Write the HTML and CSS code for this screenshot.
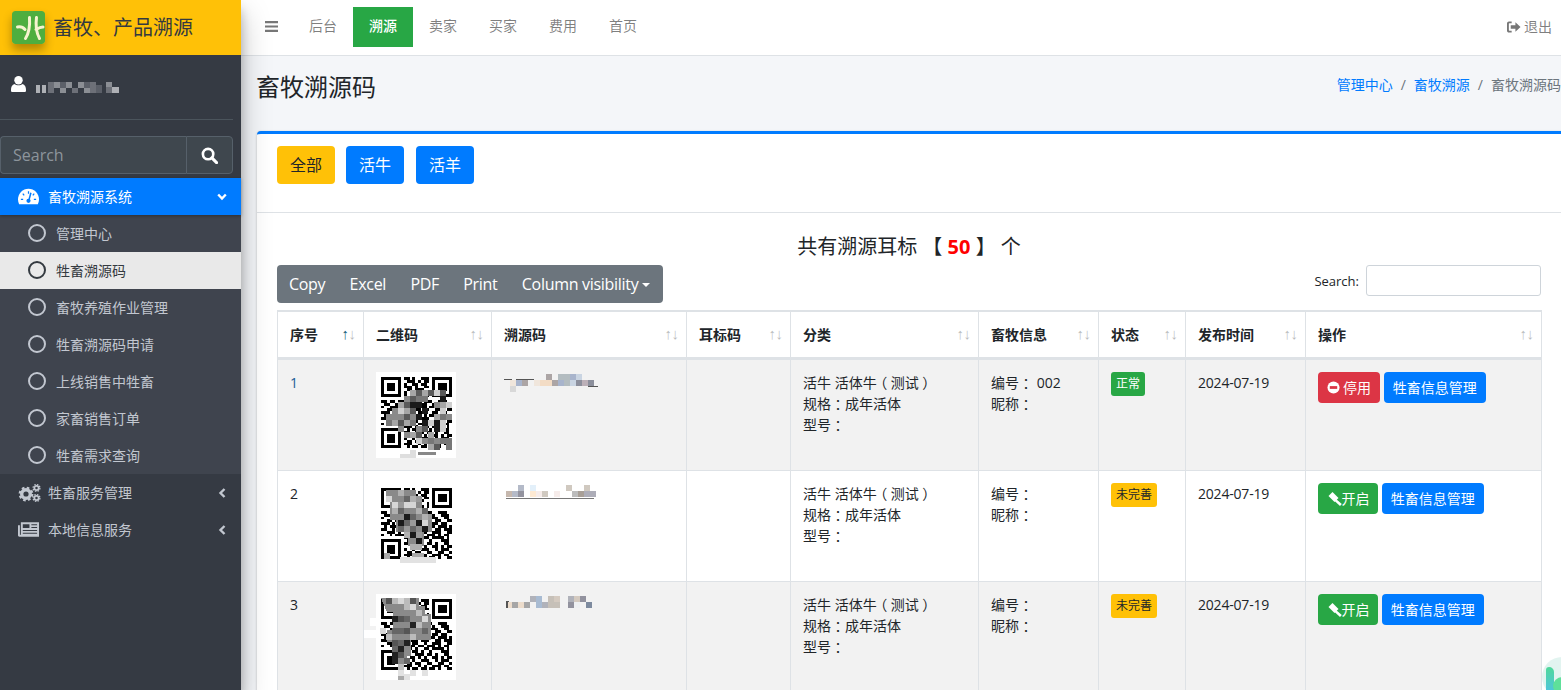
FILE: index.html
```html
<!DOCTYPE html>
<html lang="zh">
<head>
<meta charset="utf-8">
<title>畜牧溯源码</title>
<link rel="stylesheet" href="styles.css">
</head>
<body>
<svg class="defs" width="0" height="0">
  <defs>
    <g id="finder">
      <path d="M0 0h7v7h-7zM1 1v5h5v-5z" fill-rule="evenodd"/>
      <path d="M2 2h3v3h-3z"/>
    </g>
    <g id="qr">
      <g fill="#000" transform="translate(5 5) scale(2.85)" shape-rendering="crispEdges">
        <use href="#finder"/>
        <use href="#finder" x="18"/>
        <use href="#finder" y="18"/>
        <path fill="none" stroke="#000" d="M8 .5h2M11 .5h1M14 .5h3M9 1.5h3M13 1.5h1M15 1.5h2M8 2.5h1M11 2.5h2M14 2.5h2M8 3.5h3M12 3.5h1M15 3.5h2M9 4.5h2M12 4.5h3M8 5.5h1M10 5.5h1M13 5.5h1M16 5.5h1M8 6.5h1M10 6.5h1M12 6.5h1M14 6.5h1M16 6.5h1M9 7.5h3M14 7.5h2M0 8.5h2M3 8.5h2M6 8.5h3M11 8.5h2M15 8.5h3M20 8.5h3M1 9.5h2M5 9.5h2M9 9.5h2M13 9.5h3M18 9.5h1M21 9.5h3M0 10.5h1M3 10.5h3M7 10.5h2M11 10.5h1M14 10.5h2M17 10.5h3M22 10.5h2M2 11.5h2M5 11.5h1M8 11.5h3M12 11.5h2M16 11.5h1M19 11.5h2M23 11.5h2M0 12.5h3M4 12.5h1M6 12.5h3M10 12.5h1M13 12.5h3M18 12.5h2M21 12.5h2M1 13.5h1M3 13.5h3M7 13.5h1M9 13.5h2M12 13.5h1M15 13.5h1M17 13.5h2M20 13.5h3M24 13.5h1M0 14.5h2M4 14.5h1M6 14.5h2M10 14.5h3M14 14.5h3M19 14.5h2M22 14.5h3M2 15.5h3M6 15.5h1M8 15.5h1M11 15.5h2M15 15.5h1M18 15.5h3M23 15.5h2M0 16.5h1M3 16.5h1M5 16.5h3M9 16.5h3M13 16.5h2M16 16.5h3M20 16.5h1M22 16.5h2M8 17.5h3M12 17.5h1M15 17.5h2M18 17.5h4M23 17.5h1M9 18.5h1M11 18.5h2M14 18.5h1M17 18.5h1M21 18.5h3M8 19.5h2M12 19.5h3M16 19.5h2M19 19.5h1M22 19.5h2M10 20.5h2M13 20.5h1M15 20.5h1M18 20.5h2M21 20.5h1M23 20.5h2M8 21.5h1M11 21.5h1M14 21.5h3M19 21.5h1M21 21.5h3M9 22.5h2M12 22.5h2M16 22.5h2M20 22.5h2M24 22.5h1M8 23.5h3M13 23.5h1M15 23.5h1M18 23.5h3M22 23.5h2M9 24.5h1M11 24.5h2M14 24.5h2M17 24.5h2M20 24.5h1M23 24.5h2"/>
      </g>
    </g>
  </defs>
</svg>

<aside class="sidebar">
  <div class="brand">
    <svg class="brand-logo" viewBox="0 0 33 33" width="33" height="33">
      <rect width="33" height="33" rx="3" fill="#4fae3f"/>
      <path d="M17.500 6.500C18 14 17 22 13.500 27.500M5.500 16c3-.6 5.500.2 7.500 2.500M24.500 6.500C23.500 14 24 21 27.500 27.500M24 18.500c2.500-1.500 5-2.500 7-2.500" fill="none" stroke="#f7f3cf" stroke-width="3" stroke-linecap="round"/>
    </svg>
    <span class="brand-text">畜牧、产品溯源</span>
  </div>
  <div class="user-panel">
    <svg class="user-icon" viewBox="0 0 16 18" width="15" height="18"><circle cx="8" cy="5" r="4.500" fill="#fff"/><path d="M1 17.500c-1 0-1-1-1-2 0-3 1-5.500 3.500-6.500 2.500 1.800 6.500 1.800 9 0 2.500 1 3.500 3.500 3.500 6.500 0 1 0 2-1 2z" fill="#fff"/></svg>
    <svg class="user-blur" viewBox="0 0 84 14" width="84" height="14" shape-rendering="crispEdges">
      <path fill="#aeb0b5" d="M0 4h4v8h-4zM6 4h4v8h-4zM76 6h7v6h-7z"/>
      <path fill="#8b8e94" d="M18 1h6v6h-6zM30 1h6v6h-6zM42 1h6v6h-6zM24 7h6v5h-6zM48 7h6v5h-6zM70 1h6v5h-6z"/>
      <path fill="#6d7078" d="M12 1h6v11h-6zM36 7h6v5h-6zM54 1h6v11h-6zM70 6h6v6h-6z"/>
      <path fill="#5b5f68" d="M24 1h6v6h-6zM48 1h6v6h-6zM60 4h6v8h-6z"/>
    </svg>
  </div>
  <div class="side-search">
    <input class="side-input" type="text" placeholder="Search">
    <button class="side-btn" type="button" aria-label="Search">
      <svg viewBox="0 0 18 18" width="17" height="17"><circle cx="7.500" cy="7.500" r="5.500" fill="none" stroke="#fff" stroke-width="2.800"/><path d="M11.500 11.500l5 5" stroke="#fff" stroke-width="3.200" stroke-linecap="round"/></svg>
    </button>
  </div>
  <ul class="menu">
    <li class="menu-item menu-open">
      <svg class="menu-icon" viewBox="0 0 22 17" width="21" height="17"><path d="M11 .5C5 .5 0 5.500 0 11.500c0 1.800.4 3.400 1.200 5h19.600c.8-1.600 1.200-3.200 1.200-5C22 5.500 17 .5 11 .5z" fill="#fff"/><path d="M11 3v2.500M5 5.500l1.500 1.800M3 11.500h2.400M17 5.500l-1.500 1.800M19 11.500h-2.400" stroke="#007bff" stroke-width="1.300"/><path d="M13.500 4.500l-2 7.500" stroke="#007bff" stroke-width="1.600"/><circle cx="11" cy="13" r="2.200" fill="#007bff"/></svg>
      <span>畜牧溯源系统</span>
      <svg class="chev" viewBox="0 0 10 8" width="10" height="8"><path d="M1.200 1.500L5 5.500l3.800-4" fill="none" stroke="#fff" stroke-width="2.400"/></svg>
    </li>
    <li>
      <ul class="submenu">
        <li class="sub-item"><i class="ring"></i><span>管理中心</span></li>
        <li class="sub-item sub-active"><i class="ring"></i><span>牲畜溯源码</span></li>
        <li class="sub-item"><i class="ring"></i><span>畜牧养殖作业管理</span></li>
        <li class="sub-item"><i class="ring"></i><span>牲畜溯源码申请</span></li>
        <li class="sub-item"><i class="ring"></i><span>上线销售中牲畜</span></li>
        <li class="sub-item"><i class="ring"></i><span>家畜销售订单</span></li>
        <li class="sub-item"><i class="ring"></i><span>牲畜需求查询</span></li>
      </ul>
    </li>
    <li class="menu-item">
      <svg class="menu-icon" viewBox="0 0 23 18" width="23" height="18"><circle cx="8" cy="10" r="4.300" fill="none" stroke="#c2c7d0" stroke-width="3.400"/><circle cx="8" cy="10" r="6.300" fill="none" stroke="#c2c7d0" stroke-width="2.200" stroke-dasharray="2.600 2.350"/><circle cx="18.500" cy="4" r="2.100" fill="none" stroke="#c2c7d0" stroke-width="1.700"/><circle cx="18.500" cy="4" r="3.400" fill="none" stroke="#c2c7d0" stroke-width="1.300" stroke-dasharray="1.500 1.170"/><circle cx="18.500" cy="14" r="2.100" fill="none" stroke="#c2c7d0" stroke-width="1.700"/><circle cx="18.500" cy="14" r="3.400" fill="none" stroke="#c2c7d0" stroke-width="1.300" stroke-dasharray="1.500 1.170"/></svg>
      <span>牲畜服务管理</span>
      <svg class="chev chev-left" viewBox="0 0 8 10" width="8" height="10"><path d="M6.500 1L2.500 5l4 4" fill="none" stroke="#c2c7d0" stroke-width="2.400"/></svg>
    </li>
    <li class="menu-item">
      <svg class="menu-icon" viewBox="0 0 22 15" width="21" height="15"><path d="M3 0h19v15H1.500C.5 15 0 14.400 0 13.500V3h2v10h1zM5 2v4h7V2zm9 0v1h6V2zm0 3v1h6V5zM5 8v1h15V8zm0 3v1h15v-1z" fill="#c2c7d0" fill-rule="evenodd"/></svg>
      <span>本地信息服务</span>
      <svg class="chev chev-left" viewBox="0 0 8 10" width="8" height="10"><path d="M6.500 1L2.500 5l4 4" fill="none" stroke="#c2c7d0" stroke-width="2.400"/></svg>
    </li>
  </ul>
</aside>

<div class="main">
  <nav class="topnav">
    <a class="nav-burger" aria-label="menu">
      <svg viewBox="0 0 13 11" width="13" height="11"><path d="M0 0h13v2.200H0zM0 4.400h13v2.200H0zM0 8.800h13V11H0z" fill="#777"/></svg>
    </a>
    <a class="nav-link">后台</a>
    <a class="nav-link nav-current">溯源</a>
    <a class="nav-link">卖家</a>
    <a class="nav-link">买家</a>
    <a class="nav-link">费用</a>
    <a class="nav-link">首页</a>
    <a class="nav-exit">
      <svg viewBox="0 0 15 12" width="14" height="12"><path d="M5 0H2C1 0 0 1 0 2v8c0 1 1 2 2 2h3v-2H2.500C2.200 10 2 9.800 2 9.500v-7c0-.3.200-.5.500-.5H5z" fill="#777"/><path d="M9 1l5.500 5L9 11V8H4V4h5z" fill="#777"/></svg>
      退出
    </a>
  </nav>

  <header class="page-head">
    <h1 class="page-title">畜牧溯源码</h1>
    <div class="crumbs"><a>管理中心</a><b>/</b><a>畜牧溯源</a><b>/</b><span>畜牧溯源码</span></div>
  </header>

  <section class="card">
    <div class="card-head">
      <a class="btn btn-lg btn-amber">全部</a>
      <a class="btn btn-lg btn-blue">活牛</a>
      <a class="btn btn-lg btn-blue btn-third">活羊</a>
    </div>
    <div class="card-body">
      <h3 class="count">共有溯源耳标 【 <strong>50</strong> 】 个</h3>
      <div class="toolbar">
        <div class="export">
          <span>Copy</span><span>Excel</span><span>PDF</span><span>Print</span><span class="caret">Column visibility</span>
        </div>
        <label class="filter">Search:<input type="search" class="filter-input"></label>
      </div>
      <table class="grid">
        <colgroup>
          <col class="c1"><col class="c2"><col class="c3"><col class="c4"><col class="c5"><col class="c6"><col class="c7"><col class="c8"><col class="c9">
        </colgroup>
        <thead>
          <tr>
            <th class="sorted">序号</th><th>二维码</th><th>溯源码</th><th>耳标码</th><th>分类</th><th>畜牧信息</th><th>状态</th><th>发布时间</th><th>操作</th>
          </tr>
        </thead>
        <tbody>
          <tr class="odd">
            <td class="idx">1</td>
            <td>
              <svg class="qr" viewBox="0 0 80 86" width="80" height="86" shape-rendering="crispEdges">
                <rect width="80" height="86" fill="#fff"/>
                <use href="#qr"/>
                <path fill="#8a8a8a" d="M28 24h6v6h-6zM16 36h6v6h-6zM10 42h6v6h-6zM22 42h6v6h-6zM40 54h6v6h-6zM28 60h6v6h-6zM46 66h6v6h-6zM34 42h6v6h-6zM16 42h6v6h-6zM22 54h6v6h-6zM58 30h6v6h-6zM70 42h6v6h-6zM58 66h6v6h-6z"/>
                <path fill="#a6a6a6" d="M34 18h6v6h-6zM46 18h6v6h-6zM22 30h6v6h-6zM28 36h6v6h-6zM16 48h6v6h-6zM28 48h6v6h-6zM34 60h6v6h-6zM52 72h6v6h-6zM64 30h6v6h-6zM58 42h6v6h-6zM52 60h6v6h-6z"/>
                <path fill="#5a5a5a" d="M40 18h6v6h-6zM52 18h6v6h-6zM34 24h6v6h-6zM34 36h6v6h-6zM28 42h6v6h-6zM22 48h6v6h-6zM46 54h6v6h-6zM58 72h6v6h-6zM64 18h6v6h-6zM28 30h6v6h-6zM40 60h6v6h-6z"/>
                <path fill="#1a1a1a" d="M34 30h6v6h-6zM40 30h6v6h-6zM46 36h6v6h-6zM40 42h6v6h-6zM64 24h6v6h-6zM58 54h6v6h-6zM58 48h6v6h-6zM46 48h6v6h-6z"/>
                <path fill="#cfcfcf" d="M58 18h6v6h-6zM64 36h6v6h-6zM70 30h6v6h-6zM22 36h6v6h-6zM52 48h6v6h-6zM64 54h6v6h-6zM40 66h6v6h-6zM64 48h6v6h-6z"/>
                <path fill="#777" d="M46 24h6v6h-6zM10 48h6v6h-6zM64 66h6v6h-6zM70 72h6v6h-6zM64 42h6v6h-6zM40 24h6v6h-6zM34 48h6v6h-6zM70 66h6v6h-6zM52 66h6v6h-6z"/>
                <path fill="#dedede" d="M24 82h10v4h-10zM34 78h6v8h-6z"/>
                <path fill="#888" d="M42 80h18v3h-18z"/>
              </svg>
            </td>
            <td>
              <svg class="code" viewBox="0 0 96 22" width="96" height="22" shape-rendering="crispEdges">
                <path fill="#555" d="M0 7h8v1h-8zM12 7h18v1h-18zM84 14h10v1h-10z"/>
                <path fill="#f0e6dc" d="M6 8h6v6h-6zM30 8h6v6h-6z"/>
                <path fill="#a8b4cc" d="M12 8h6v6h-6zM54 8h6v6h-6zM66 2h6v6h-6z"/>
                <path fill="#aca5a5" d="M18 8h6v6h-6zM42 2h6v6h-6zM48 8h6v6h-6z"/>
                <path fill="#f3dcc5" d="M36 8h6v6h-6zM42 8h6v6h-6z"/>
                <path fill="#b3bcc0" d="M54 2h6v6h-6zM60 2h6v6h-6zM60 8h6v6h-6z"/>
                <path fill="#c9d4e2" d="M66 8h6v6h-6zM72 2h6v6h-6z"/>
                <path fill="#8c8f9c" d="M72 8h6v6h-6zM84 8h6v6h-6z"/>
                <path fill="#bcb0b8" d="M78 8h6v6h-6z"/>
                <path fill="#d8d8d8" d="M6 14h6v6h-6z"/>
              </svg>
            </td>
            <td></td>
            <td><div>活牛 活体牛<span class="punct">（</span>测试<span class="punct">）</span></div><div>规格<span class="punct">：</span>成年活体</div><div>型号<span class="punct">：</span></div></td>
            <td><div>编号<span class="punct">：</span> 002</div><div>昵称<span class="punct">：</span></div></td>
            <td><span class="tag tag-green">正常</span></td>
            <td class="date">2024-07-19</td>
            <td class="ops">
              <a class="btn btn-sm btn-red"><svg class="btn-icon" viewBox="0 0 14 14" width="13" height="13"><circle cx="7" cy="7" r="6.500" fill="#fff"/><path d="M3 5.500h8v3H3z" fill="#dc3545"/></svg>停用</a>
              <a class="btn btn-sm btn-blue">牲畜信息管理</a>
            </td>
          </tr>
          <tr>
            <td>2</td>
            <td>
              <svg class="qr" viewBox="0 0 80 86" width="80" height="86" shape-rendering="crispEdges">
                <use href="#qr"/>
                <path fill="#8a8a8a" d="M10 7h30v6h6v12h6v6h4v18h-8v14h-16v-14h-12v-12h-6v-24h-4v-6z"/>
                <path fill="#b0b0b0" d="M22 7h6v6h-6zM34 13h6v6h-6zM16 25h6v6h-6zM40 25h6v6h-6zM46 31h6v6h-6zM28 49h6v6h-6zM34 61h6v6h-6zM40 61h6v6h-6z"/>
                <path fill="#666" d="M28 13h6v6h-6zM22 25h6v6h-6zM34 31h6v6h-6zM28 37h6v6h-6zM22 43h6v6h-6zM34 43h6v6h-6zM46 25h6v6h-6z"/>
                <path fill="#1a1a1a" d="M28 31h6v6h-6zM40 37h6v6h-6zM46 43h6v6h-6zM34 49h6v6h-6zM40 55h6v6h-6zM22 37h6v6h-6z"/>
                <path fill="#d6d6d6" d="M16 19h6v6h-6zM28 19h6v6h-6zM34 19h6v6h-6zM10 13h6v6h-6zM46 37h6v6h-6z"/>
                <path fill="#999" d="M22 19h6v6h-6zM40 13h6v6h-6zM34 37h6v6h-6zM28 43h6v6h-6zM52 31h4v6h-4zM40 49h6v6h-6z"/>
                <path fill="#e2e2e2" d="M24 74h6v6h-6zM30 74h30v6h-30z"/>
                <path fill="#aaa" d="M8 70h6v6h-6zM36 70h12v4h-12z"/>
              </svg>
            </td>
            <td>
              <svg class="code" viewBox="0 0 96 22" width="96" height="22" shape-rendering="crispEdges">
                <path fill="#777" d="M2 15h88v1h-88z"/>
                <path fill="#c6b8ae" d="M2 8h6v6h-6z"/>
                <path fill="#b4bac8" d="M8 8h6v6h-6zM14 2h6v6h-6z"/>
                <path fill="#93939f" d="M14 8h6v6h-6z"/>
                <path fill="#fde9d2" d="M26 8h6v6h-6z"/>
                <path fill="#e3f0fa" d="M26 2h6v6h-6z"/>
                <path fill="#f6ecea" d="M32 8h6v6h-6zM50 8h6v6h-6z"/>
                <path fill="#d0c9c0" d="M38 8h6v6h-6zM62 2h6v6h-6zM80 2h6v6h-6z"/>
                <path fill="#bcbcbc" d="M68 8h6v6h-6z"/>
                <path fill="#a89f97" d="M74 8h6v6h-6z"/>
                <path fill="#adadb8" d="M80 8h12v6h-12z"/>
              </svg>
            </td>
            <td></td>
            <td><div>活牛 活体牛<span class="punct">（</span>测试<span class="punct">）</span></div><div>规格<span class="punct">：</span>成年活体</div><div>型号<span class="punct">：</span></div></td>
            <td><div>编号<span class="punct">：</span></div><div>昵称<span class="punct">：</span></div></td>
            <td><span class="tag tag-amber">未完善</span></td>
            <td class="date">2024-07-19</td>
            <td class="ops">
              <a class="btn btn-sm btn-green"><svg class="btn-icon gavel" viewBox="0 0 15 15" width="15" height="15"><path d="M5.500 1l6 6-4 4-6-6z" fill="#fff"/><path d="M8.500 7.500l6.300 5.500-1.800 2-6.200-5.800z" fill="#fff"/></svg>开启</a>
              <a class="btn btn-sm btn-blue">牲畜信息管理</a>
            </td>
          </tr>
          <tr class="odd">
            <td>3</td>
            <td>
              <svg class="qr" viewBox="0 0 80 86" width="80" height="86" shape-rendering="crispEdges">
                <rect width="80" height="86" fill="#fff"/>
                <path fill="#fff" d="M-12 36h12v8h-12zM-6 24h6v8h-6z"/>
                <use href="#qr"/>
                <path fill="#8a8a8a" d="M5 4h38v8h6v8h6v26h-20v16h-4v8h-14v-22h-6v-12h6v-18h-6z"/>
                <path fill="#555" d="M10 4h6v6h-6zM34 4h6v6h-6zM22 22h6v6h-6zM28 34h6v6h-6zM16 46h6v6h-6zM22 58h6v6h-6z"/>
                <path fill="#bbb" d="M16 4h6v6h-6zM28 4h6v6h-6zM28 10h6v6h-6zM40 16h6v6h-6zM40 28h6v6h-6zM34 40h6v6h-6zM10 40h6v6h-6zM22 70h6v6h-6z"/>
                <path fill="#d8d8d8" d="M22 4h6v6h-6zM34 10h6v6h-6zM46 22h6v6h-6zM4 34h6v6h-6z"/>
                <path fill="#222" d="M16 58h6v6h-6zM22 52h6v6h-6zM16 22h6v6h-6zM28 46h6v6h-6zM34 28h6v6h-6zM16 64h6v6h-6z"/>
                <path fill="#666" d="M28 22h6v6h-6zM22 34h6v6h-6zM16 34h6v6h-6zM46 34h6v6h-6zM22 46h6v6h-6zM16 52h6v6h-6zM28 64h6v6h-6z"/>
                <path fill="#e2e2e2" d="M22 76h6v6h-6zM34 76h6v6h-6zM46 76h6v6h-6zM28 80h6v6h-6z"/>
                <path fill="#aaa" d="M22 82h6v4h-6z"/>
              </svg>
            </td>
            <td>
              <svg class="code" viewBox="0 0 96 22" width="96" height="22" shape-rendering="crispEdges">
                <path fill="#555" d="M2 7h3v7h-3z"/>
                <path fill="#ecdccb" d="M4 8h6v6h-6zM14 8h6v6h-6z"/>
                <path fill="#a6a6a6" d="M8 8h6v6h-6zM20 8h6v6h-6z"/>
                <path fill="#a8bbd2" d="M32 8h6v6h-6zM32 2h6v6h-6z"/>
                <path fill="#b0b2ba" d="M26 2h6v6h-6zM38 8h6v6h-6zM64 2h6v6h-6z"/>
                <path fill="#c6c0b8" d="M44 8h6v6h-6zM50 8h6v6h-6zM44 2h6v6h-6z"/>
                <path fill="#d4cac0" d="M50 2h6v6h-6zM70 2h6v6h-6z"/>
                <path fill="#92929e" d="M64 8h6v6h-6zM76 2h6v6h-6z"/>
                <path fill="#eef0f2" d="M70 8h6v6h-6z"/>
                <path fill="#7d8a9e" d="M82 8h6v6h-6z"/>
              </svg>
            </td>
            <td></td>
            <td><div>活牛 活体牛<span class="punct">（</span>测试<span class="punct">）</span></div><div>规格<span class="punct">：</span>成年活体</div><div>型号<span class="punct">：</span></div></td>
            <td><div>编号<span class="punct">：</span></div><div>昵称<span class="punct">：</span></div></td>
            <td><span class="tag tag-amber">未完善</span></td>
            <td class="date">2024-07-19</td>
            <td class="ops">
              <a class="btn btn-sm btn-green"><svg class="btn-icon gavel" viewBox="0 0 15 15" width="15" height="15"><path d="M5.500 1l6 6-4 4-6-6z" fill="#fff"/><path d="M8.500 7.500l6.300 5.500-1.800 2-6.200-5.800z" fill="#fff"/></svg>开启</a>
              <a class="btn btn-sm btn-blue">牲畜信息管理</a>
            </td>
          </tr>
        </tbody>
      </table>
    </div>
  </section>
</div>
<div class="corner-widget"><i class="drop-a"></i><i class="drop-b"></i></div>
</body>
</html>
```

FILE: styles.css
```css
* { box-sizing: border-box; }
html, body { height: 100%; }
body {
  margin: 0;
  display: flex;
  height: 690px;
  overflow: hidden;
  background: #f4f6f9;
  color: #212529;
  font: 14px/21px "Open Sans", "Noto Sans CJK SC", sans-serif;
  text-spacing-trim: space-all;
}
a { color: inherit; text-decoration: none; cursor: pointer; }
ul { list-style: none; margin: 0; padding: 0; }
.defs { position: absolute; }

/* sidebar */
.sidebar {
  flex: 0 0 241px;
  width: 241px;
  min-width: 0;
  height: 690px;
  background: #353a43;
  color: #c2c7d0;
  box-shadow: 0 14px 28px rgba(0,0,0,.25), 0 10px 10px rgba(0,0,0,.22);
  position: relative;
  z-index: 2;
}
.brand {
  height: 55px;
  background: #ffc107;
  display: flex;
  align-items: center;
  gap: 8px;
  padding: 0 0 1px 12px;
}
.brand-logo { box-shadow: 0 6px 10px rgba(0,0,0,.3); border-radius: 3px; }
.brand-text { font-size: 20px; color: #343a40; line-height: 30px; padding-top: 2px; }
.user-panel {
  height: 65px;
  margin-right: 8px;
  border-bottom: 1px solid #4b545c;
  display: flex;
  align-items: flex-start;
  padding: 20px 0 0 11px;
  gap: 10px;
}
.user-blur { margin-top: 6px; }
.side-search { display: flex; margin: 16px 8px 4px 0; height: 38px; }
.side-input {
  flex: 1;
  width: 0;
  min-width: 0;
  background: #3f474e;
  border: 1px solid #56606a;
  border-right: 0;
  border-radius: 4px 0 0 4px;
  padding: 0 12px;
  color: #fff;
  font: 16px "Open Sans", sans-serif;
  outline: 0;
}
.side-input::placeholder { color: #8d959c; opacity: 1; }
.side-btn {
  flex: 0 0 47px;
  background: #3f474e;
  border: 1px solid #56606a;
  border-radius: 0 4px 4px 0;
  padding: 0;
  display: flex;
  align-items: center;
  justify-content: center;
}
.menu-item {
  height: 37px;
  display: flex;
  align-items: center;
  padding-left: 18px;
  position: relative;
}
.menu-item span { position: absolute; left: 48px; }
.menu-open { background: #007bff; color: #fff; box-shadow: 0 1px 3px rgba(0,0,0,.3); z-index: 1; }
.chev { position: absolute; right: 14px; top: 15px; }
.chev-left { right: 15px; top: 14px; }
.submenu { background: #3f444e; }
.sub-item {
  height: 37px;
  display: flex;
  align-items: center;
  padding-left: 28px;
  gap: 10px;
}
.sub-active { background: #e9e9e9; color: #343a40; }
.ring {
  width: 18px;
  height: 18px;
  border-radius: 50%;
  border: 2px solid #c2c7d0;
  margin-top: -2px;
}
.sub-active .ring { border-color: #343a40; }

/* main column */
.main { flex: 1; min-width: 0; display: flex; flex-direction: column; }
.topnav {
  height: 56px;
  flex: none;
  background: #fff;
  border-bottom: 1px solid #dee2e6;
  display: flex;
  align-items: center;
  padding: 0 9px 2px 8px;
  color: rgba(0,0,0,.5);
}
.nav-burger { width: 44px; height: 40px; display: flex; align-items: center; padding-left: 16px; }
.nav-link { width: 60px; height: 40px; line-height: 38px; text-align: center; }
.nav-current { background: #28a745; color: #fff; font-weight: 500; }
.nav-exit { margin-left: auto; display: flex; align-items: center; gap: 3px; }
.page-head {
  flex: none;
  height: 75px;
  display: flex;
  justify-content: space-between;
  padding: 15px 0 0 15px;
}
.page-title { margin: 0; font-size: 24px; font-weight: 400; line-height: 32px; }
.crumbs { display: flex; gap: 8px; padding-top: 3px; white-space: nowrap; color: #6c757d; }
.crumbs a { color: #007bff; }
.crumbs b { font-weight: 400; }

/* card */
.card {
  margin-left: 16px;
  background: #fff;
  border-top: 3px solid #007bff;
  border-radius: 4px 0 0 0;
  box-shadow: 0 0 1px rgba(0,0,0,.125), 0 1px 3px rgba(0,0,0,.2);
  flex: none;
}
.card-head {
  height: 79px;
  border-bottom: 1px solid #dee2e6;
  padding: 12px 20px;
  display: flex;
  gap: 11px;
}
.btn {
  display: inline-flex;
  align-items: center;
  justify-content: center;
  border-radius: 4px;
  white-space: nowrap;
}
.btn-lg { width: 58px; height: 38px; font-size: 16px; }
.btn-third { margin-left: 1px; }
.btn-sm { height: 31px; padding: 0 9px; }
.btn-amber { background: #ffc107; color: #212529; }
.btn-blue { background: #007bff; color: #fff; }
.btn-red { background: #dc3545; color: #fff; }
.btn-green { background: #28a745; color: #fff; width: 60px; padding: 0; }
.btn-icon { margin-right: 3px; flex: none; }
.btn-icon.gavel { margin-right: 0; }
.card-body { padding: 19px 20px 20px; }
.count {
  margin: 0;
  height: 33px;
  font-size: 20px;
  line-height: 30px;
  font-weight: 400;
  text-align: center;
}
.count strong { color: #f00; font-weight: 700; }
.toolbar { display: flex; justify-content: space-between; height: 45px; }
.export {
  display: flex;
  height: 38px;
  width: 386px;
  background: #6c757d;
  color: #fff;
  border-radius: 4px;
  font-size: 16px;
  line-height: 38px;
  padding: 0 12px;
  gap: 24.300px;
  letter-spacing: -.3px;
  white-space: nowrap;
}
.caret::after {
  content: "";
  display: inline-block;
  margin-left: 4px;
  vertical-align: 3px;
  border-top: 4.800px solid #fff;
  border-left: 4.800px solid transparent;
  border-right: 4.800px solid transparent;
}
.filter { display: flex; gap: 7px; height: 31px; align-items: center; font-size: 13px; padding-top: 2px; }
.filter-input {
  width: 175px;
  height: 31px;
  margin-top: -2px;
  border: 1px solid #ced4da;
  border-radius: 3px;
  outline: 0;
}

/* table */
.grid {
  width: 1264px;
  table-layout: fixed;
  border-collapse: collapse;
  border: 1px solid #dee2e6;
}
.c1 { width: 86px; } .c2 { width: 128px; } .c3 { width: 195px; } .c4 { width: 104px; }
.c5 { width: 188px; } .c6 { width: 120px; } .c7 { width: 87px; } .c8 { width: 120px; } .c9 { width: 236px; }
.grid th, .grid td {
  border: 1px solid #dee2e6;
  padding: 12px;
  vertical-align: top;
  text-align: left;
}
.grid th {
  position: relative;
  border-top-width: 2px;
  border-bottom-width: 3px;
  font-weight: 700;
  font-size: 14px;
}
.grid th::before, .grid th::after {
  position: absolute;
  top: 11px;
  font: 15px/21px "Liberation Sans", sans-serif;
  opacity: .3;
}
.grid th::before { content: "\2191"; right: 14px; }
.grid th::after { content: "\2193"; right: 7px; }
.grid .sorted::before { opacity: 1; color: #17607a; }
.odd td { background: #f2f2f2; }
.idx { color: #1a5d96; }
.date { letter-spacing: -.2px; }
.punct { font-feature-settings: "halt"; padding: 0 3.500px; }
.qr, .code { display: block; overflow: visible; }
.tag {
  display: inline-block;
  height: 24px;
  padding: 0 5px;
  font-size: 12px;
  line-height: 24px;
  border-radius: 3px;
}
.tag-green { background: #28a745; color: #fff; }
.tag-amber { background: #ffc107; color: #212529; }
.ops { white-space: nowrap; }
.ops .btn { vertical-align: top; }

.corner-widget {
  position: absolute;
  left: 1542px;
  top: 657px;
  width: 40px;
  height: 40px;
  border-radius: 50%;
  background: #e2f4f0;
  z-index: 3;
}
.drop-a {
  position: absolute;
  left: 4px;
  top: 10px;
  width: 8px;
  height: 26px;
  border-radius: 5px 8px 4px 6px;
  background: linear-gradient(#4fd89a, #4fc4e0);
}
.drop-b {
  position: absolute;
  left: 11px;
  top: 20px;
  width: 18px;
  height: 18px;
  border-radius: 50%;
  background: #5ee09a;
}
```
